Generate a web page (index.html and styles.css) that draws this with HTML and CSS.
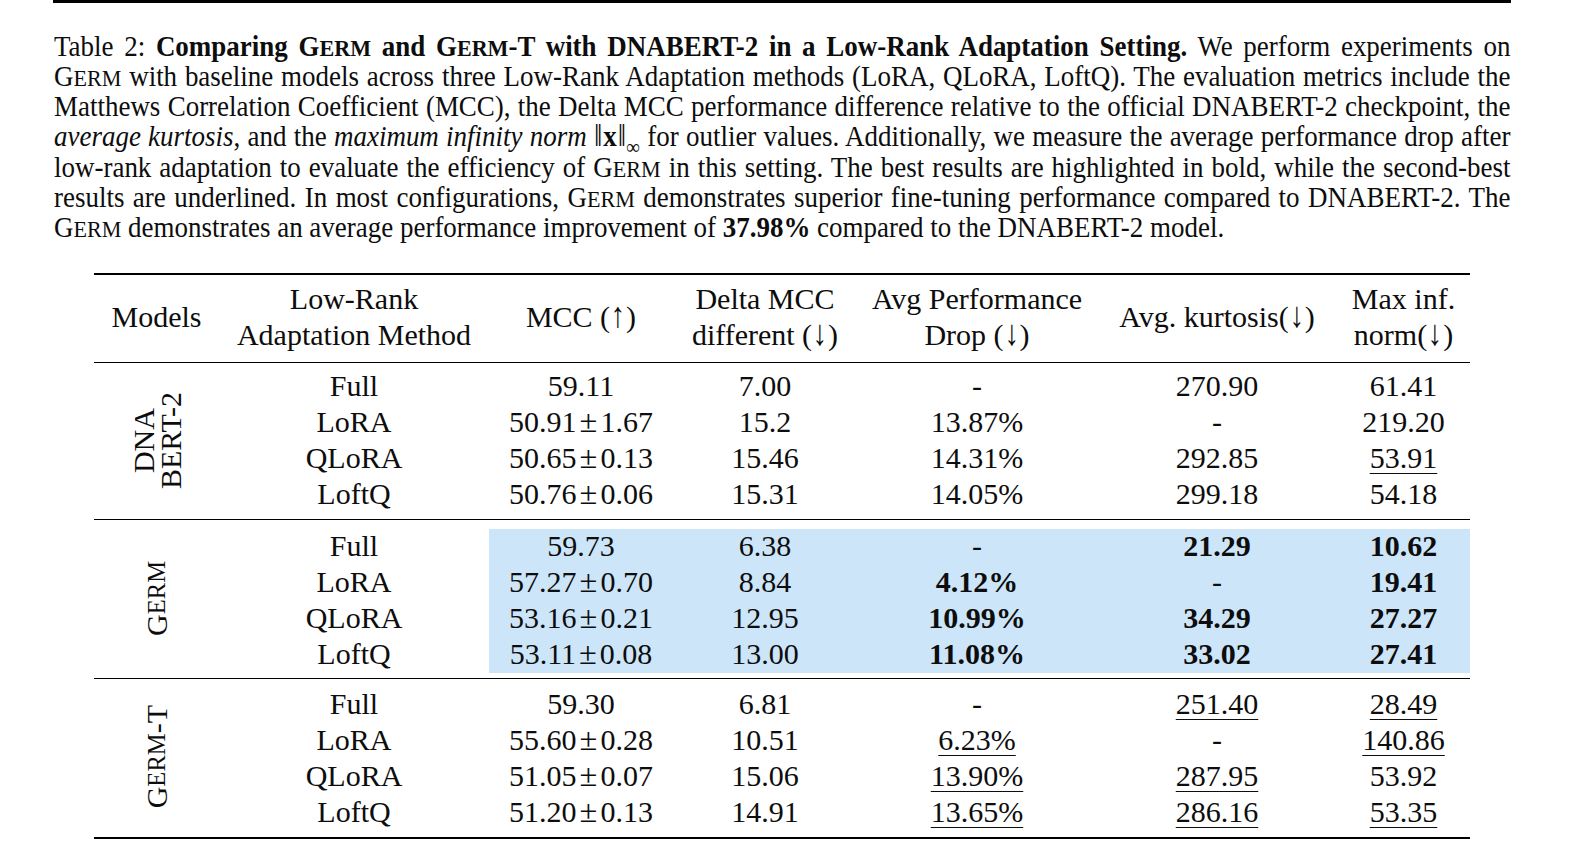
FILE: index.html
```html
<!DOCTYPE html>
<html>
<head>
<meta charset="utf-8">
<link rel="stylesheet" href="styles.css">
</head>
<body>
<div class="page">
  <div class="caption">
    <div class="ln">Table 2: <b>Comparing G<span class="scl">ERM</span> and G<span class="scl">ERM</span>-T with DNABERT-2 in a Low-Rank Adaptation Setting.</b> We perform experiments on</div>
    <div class="ln">G<span class="scl">ERM</span> with baseline models across three Low-Rank Adaptation methods (LoRA, QLoRA, LoftQ). The evaluation metrics include the</div>
    <div class="ln">Matthews Correlation Coefficient (MCC), the Delta MCC performance difference relative to the official DNABERT-2 checkpoint, the</div>
    <div class="ln"><i>average kurtosis</i>, and the <i>maximum infinity norm</i> <span class="norm"><span class="bar">‖</span><b>x</b><span class="bar">‖</span><sub>∞</sub></span> for outlier values. Additionally, we measure the average performance drop after</div>
    <div class="ln">low-rank adaptation to evaluate the efficiency of G<span class="scl">ERM</span> in this setting. The best results are highlighted in bold, while the second-best</div>
    <div class="ln">results are underlined. In most configurations, G<span class="scl">ERM</span> demonstrates superior fine-tuning performance compared to DNABERT-2. The</div>
    <div class="ln last">G<span class="scl">ERM</span> demonstrates an average performance improvement of <b>37.98%</b> compared to the DNABERT-2 model.</div>
  </div>

  <table class="res">
    <colgroup>
      <col class="c-model"><col class="c-method"><col class="c-mcc"><col class="c-delta"><col class="c-drop"><col class="c-kurt"><col class="c-max">
    </colgroup>
    <thead>
      <tr>
        <th><div class="hcell">Models</div></th>
        <th><div class="hcell"><span>Low-Rank</span><span>Adaptation Method</span></div></th>
        <th><div class="hcell"><span>MCC (<span class="arr">↑</span>)</span></div></th>
        <th><div class="hcell"><span>Delta MCC</span><span>different (<span class="arr">↓</span>)</span></div></th>
        <th><div class="hcell"><span>Avg Performance</span><span>Drop (<span class="arr">↓</span>)</span></div></th>
        <th><div class="hcell"><span>Avg. kurtosis(<span class="arr">↓</span>)</span></div></th>
        <th><div class="hcell"><span>Max inf.</span><span>norm(<span class="arr">↓</span>)</span></div></th>
      </tr>
    </thead>
    <tbody>
      <tr class="sp"><td colspan="7"><div class="gap g5"></div></td></tr>
      <tr>
        <td rowspan="4" class="lab first"><div class="vwrap"><div class="vt two">DNA<br>BERT-2</div></div></td>
        <td>Full</td><td>59.11</td><td>7.00</td><td>-</td><td>270.90</td><td>61.41</td>
      </tr>
      <tr><td>LoRA</td><td>50.91<span class="pm">±</span>1.67</td><td>15.2</td><td>13.87%</td><td>-</td><td>219.20</td></tr>
      <tr><td>QLoRA</td><td>50.65<span class="pm">±</span>0.13</td><td>15.46</td><td>14.31%</td><td>292.85</td><td><u>53.91</u></td></tr>
      <tr><td>LoftQ</td><td>50.76<span class="pm">±</span>0.06</td><td>15.31</td><td>14.05%</td><td>299.18</td><td>54.18</td></tr>
      <tr class="sp"><td colspan="7"><div class="gap g7"></div></td></tr>
    </tbody>
    <tbody class="shift">
      <tr class="sp rule"><td colspan="7"><div class="gap g9"></div></td></tr>
      <tr>
        <td rowspan="4" class="lab"><div class="vwrap"><div class="vt">G<span class="scl">ERM</span></div></div></td>
        <td>Full</td><td class="hl">59.73</td><td class="hl">6.38</td><td class="hl">-</td><td class="hl"><b>21.29</b></td><td class="hl"><b>10.62</b></td>
      </tr>
      <tr><td>LoRA</td><td class="hl">57.27<span class="pm">±</span>0.70</td><td class="hl">8.84</td><td class="hl"><b>4.12%</b></td><td class="hl">-</td><td class="hl"><b>19.41</b></td></tr>
      <tr><td>QLoRA</td><td class="hl">53.16<span class="pm">±</span>0.21</td><td class="hl">12.95</td><td class="hl"><b>10.99%</b></td><td class="hl"><b>34.29</b></td><td class="hl"><b>27.27</b></td></tr>
      <tr><td>LoftQ</td><td class="hl">53.11<span class="pm">±</span>0.08</td><td class="hl">13.00</td><td class="hl"><b>11.08%</b></td><td class="hl"><b>33.02</b></td><td class="hl"><b>27.41</b></td></tr>
      <tr class="sp"><td colspan="7"><div class="gap g5"></div></td></tr>
    </tbody>
    <tbody class="shift">
      <tr class="sp rule"><td colspan="7"><div class="gap g8"></div></td></tr>
      <tr>
        <td rowspan="4" class="lab"><div class="vwrap"><div class="vt">G<span class="scl">ERM</span>-T</div></div></td>
        <td>Full</td><td>59.30</td><td>6.81</td><td>-</td><td><u>251.40</u></td><td><u>28.49</u></td>
      </tr>
      <tr><td>LoRA</td><td>55.60<span class="pm">±</span>0.28</td><td>10.51</td><td><u>6.23%</u></td><td>-</td><td><u>140.86</u></td></tr>
      <tr><td>QLoRA</td><td>51.05<span class="pm">±</span>0.07</td><td>15.06</td><td><u>13.90%</u></td><td><u>287.95</u></td><td>53.92</td></tr>
      <tr><td>LoftQ</td><td>51.20<span class="pm">±</span>0.13</td><td>14.91</td><td><u>13.65%</u></td><td><u>286.16</u></td><td><u>53.35</u></td></tr>
      <tr class="sp end"><td colspan="7"><div class="gap g6"></div></td></tr>
    </tbody>
  </table>
</div>
</body>
</html>
```

FILE: styles.css
```css
html, body {
  margin: 0;
  padding: 0;
  background: #ffffff;
}

body {
  font-family: "Liberation Serif", "Times New Roman", serif;
  color: #0d0d0d;
  width: 1574px;
  height: 867px;
  overflow: hidden;
}

.page {
  margin-left: 53px;
  width: 1458px;
  border-top: 3px solid #000;
}

/* caption: the source typesetting is slightly condensed */
.caption {
  margin-top: 28px;
  margin-left: 1px;
  width: 1566px;
  font-size: 29px;
  line-height: 30.15px;
  transform: scaleX(0.93);
  transform-origin: 0 0;
}

.ln {
  height: 30.15px;
  white-space: nowrap;
  text-align: justify;
  text-align-last: justify;
}

.ln.last {
  text-align: left;
  text-align-last: left;
}

.scl {
  font-size: 0.82em;
  line-height: 1;
}

.norm {
  white-space: nowrap;
  line-height: 0;
}

.norm .bar {
  font-family: "Liberation Serif", serif;
  font-size: 32px;
  line-height: 0;
}

.norm b {
  margin: 0 1px;
  line-height: 0;
}

.norm sub {
  font-size: 21px;
  line-height: 0;
  vertical-align: -8px;
}

/* table */
.res {
  margin-top: 31px;
  margin-left: 41px;
  width: 1376px;
  table-layout: fixed;
  border-collapse: separate;
  border-spacing: 0;
  font-size: 30px;
}

.c-model { width: 125px; }
.c-method { width: 270px; }
.c-mcc { width: 184px; }
.c-delta { width: 184px; }
.c-drop { width: 240px; }
.c-kurt { width: 240px; }
.c-max { width: 133px; }

.res th {
  font-weight: normal;
  padding: 0;
  border-top: 2px solid #000;
  border-bottom: 1px solid #000;
}

.hcell {
  height: 87px;
  display: flex;
  flex-direction: column;
  justify-content: center;
  align-items: center;
  line-height: 36px;
  white-space: nowrap;
  padding-bottom: 3px;
  box-sizing: border-box;
}

.arr {
  display: inline-block;
  font-size: 1.2em;
  line-height: 0;
  transform: scaleX(0.8);
  margin: 0 -1px;
}

.pm {
  display: inline-block;
  margin: 0 3px;
  font-size: 1.08em;
  line-height: 0;
}

.res td {
  padding: 0;
  text-align: center;
  line-height: 36px;
  height: 36px;
  white-space: nowrap;
}

.res tbody.shift td:not(.lab) {
  height: auto;
  line-height: 33px;
  padding-bottom: 3px;
}

.res tr.sp td,
.res tbody.shift tr.sp td {
  height: auto;
  line-height: 0;
  font-size: 0;
  padding: 0;
}

.res tr.rule td {
  border-top: 1px solid #000;
}

.res tr.end td {
  border-bottom: 2px solid #000;
}

.gap { height: 6px; }
.gap.g5 { height: 5px; }
.gap.g6 { height: 6px; }
.gap.g7 { height: 7px; }
.gap.g8 { height: 8px; }
.gap.g9 { height: 9px; }

.res td.hl {
  background: #cce5f9;
}

.res td.lab {
  vertical-align: middle;
  height: auto;
  line-height: normal;
  padding: 0 0 5px 0;
}

.res td.lab.first {
  padding: 2px 0 0 0;
}

.vwrap {
  display: flex;
  justify-content: center;
  align-items: center;
}

.vt {
  writing-mode: vertical-rl;
  transform: rotate(180deg);
  line-height: 36px;
  white-space: nowrap;
}

.vt .scl {
  line-height: 36px;
}

.vt.two {
  line-height: 27px;
}

.res u {
  text-decoration: underline;
  text-decoration-thickness: 1px;
  text-underline-offset: 5px;
}
```
